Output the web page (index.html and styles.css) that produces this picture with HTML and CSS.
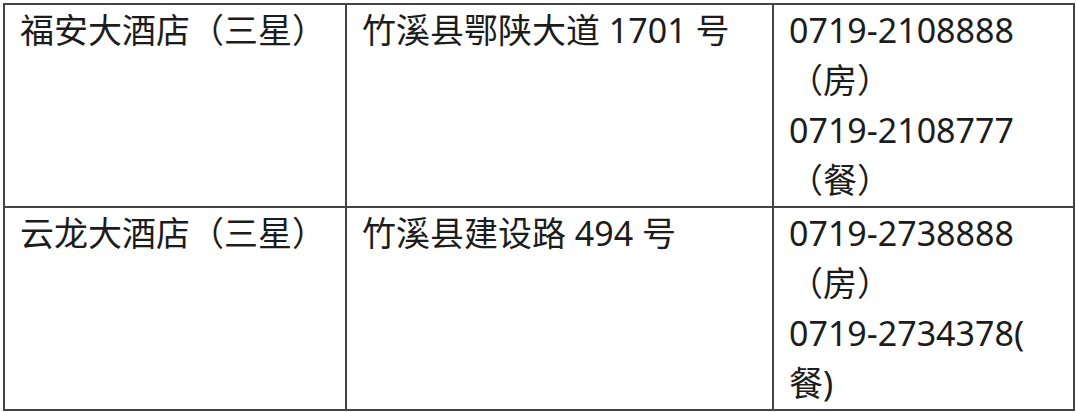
FILE: index.html
```html
<!DOCTYPE html>
<html lang="zh-CN">
<head>
<meta charset="utf-8">
<title>酒店</title>
<link rel="stylesheet" href="styles.css">
</head>
<body>
<table class="hotels">
  <colgroup>
    <col class="c-name">
    <col class="c-addr">
    <col class="c-tel">
  </colgroup>
  <tr>
    <td>福安大酒店（三星）</td>
    <td>竹溪县鄂陕大道 1701 号</td>
    <td>0719-2108888<br>（房）<br>0719-2108777<br>（餐）</td>
  </tr>
  <tr>
    <td>云龙大酒店（三星）</td>
    <td>竹溪县建设路 494 号</td>
    <td>0719-2738888<br>（房）<br>0719-2734378(<br>餐)</td>
  </tr>
</table>
</body>
</html>
```

FILE: styles.css
```css
html, body {
  margin: 0;
  padding: 0;
  background: #ffffff;
}

body {
  padding: 3px 0 0 3px;
}

.hotels {
  border-collapse: collapse;
  table-layout: fixed;
  width: 1072px;
  font-family: "Noto Sans", "Noto Sans CJK SC", sans-serif;
  font-size: 34px;
  line-height: 50px;
  color: #1c1c1c;
}

.c-name { width: 342px; }
.c-addr { width: 427px; }
.c-tel { width: 301px; }

.hotels td {
  border: 2px solid #444444;
  vertical-align: top;
  padding: 0 4px 1px 15px;
  white-space: nowrap;
}
```
